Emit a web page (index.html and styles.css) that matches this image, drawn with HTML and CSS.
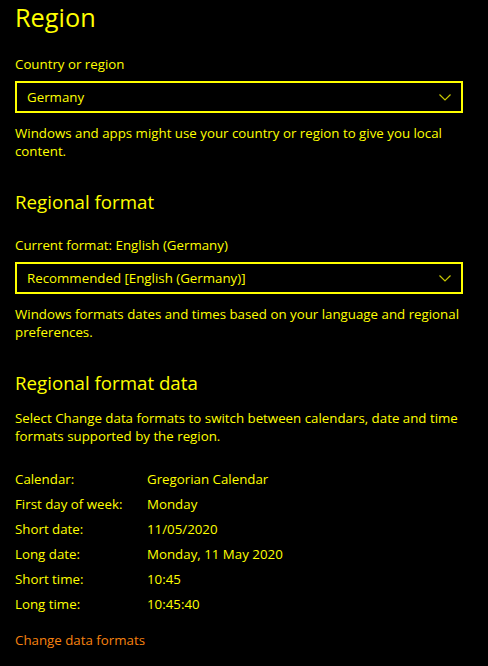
FILE: index.html
```html
<!DOCTYPE html>
<html lang="en">
<head>
<meta charset="utf-8">
<title>Region</title>
<link rel="stylesheet" href="styles.css">
</head>
<body>
<main class="page">
  <h1 class="title">Region</h1>

  <section class="group">
    <label class="label">Country or region</label>
    <div class="select">
      <span class="select-text">Germany</span>
      <svg class="chevron" width="12" height="7" viewBox="0 0 12 7"><path d="M0.5 0.5 L6 6 L11.5 0.5" fill="none" stroke="#c8c800" stroke-width="1.2"/></svg>
    </div>
    <p class="desc">Windows and apps might use your country or region to give you local content.</p>
  </section>

  <h2 class="heading">Regional format</h2>
  <section class="group">
    <label class="label">Current format: English (Germany)</label>
    <div class="select">
      <span class="select-text">Recommended [English (Germany)]</span>
      <svg class="chevron" width="12" height="7" viewBox="0 0 12 7"><path d="M0.5 0.5 L6 6 L11.5 0.5" fill="none" stroke="#c8c800" stroke-width="1.2"/></svg>
    </div>
    <p class="desc">Windows formats dates and times based on your language and regional preferences.</p>
  </section>

  <h2 class="heading">Regional format data</h2>
  <p class="desc desc-intro">Select Change data formats to switch between calendars, date and time formats supported by the region.</p>

  <dl class="data">
    <dt>Calendar:</dt><dd>Gregorian Calendar</dd>
    <dt>First day of week:</dt><dd>Monday</dd>
    <dt>Short date:</dt><dd>11/05/2020</dd>
    <dt>Long date:</dt><dd>Monday, 11 May 2020</dd>
    <dt>Short time:</dt><dd>10:45</dd>
    <dt>Long time:</dt><dd>10:45:40</dd>
  </dl>

  <a class="link" href="#">Change data formats</a>
</main>
</body>
</html>
```

FILE: styles.css
```css
html, body {
  margin: 0;
  padding: 0;
  background: #000;
}
body {
  font-family: "Open Sans", "Noto Sans", sans-serif;
  color: #ffff00;
  font-size: 13.3px;
}
.page {
  width: 448px;
  padding: 0 15px;
  display: flex;
  flex-direction: column;
  align-items: stretch;
}
.title {
  margin: 0;
  font-weight: 400;
  font-size: 25.3px;
  line-height: 34px;
}
.group {
  display: flex;
  flex-direction: column;
}
.label {
  display: block;
  margin-top: 20px;
  line-height: 20px;
}
.select {
  margin-top: 7px;
  height: 28px;
  border: 2px solid #ffff00;
  display: flex;
  align-items: center;
  justify-content: space-between;
  padding: 0 10px;
}
.select-text {
  line-height: 28px;
}
.desc {
  margin: 11px 0 0;
  line-height: 18px;
  width: 458px;
}
.heading {
  margin: 29px 0 0;
  font-weight: 400;
  font-size: 18.7px;
  line-height: 26px;
}
.desc-intro {
  margin-top: 13px;
}
.data {
  margin: 22px 0 0;
  display: grid;
  grid-template-columns: 132px 1fr;
  grid-auto-rows: 25px;
  align-items: center;
}
.data dt, .data dd {
  margin: 0;
  line-height: 25px;
}
.link {
  margin-top: 13px;
  color: #f7820f;
  text-decoration: none;
  line-height: 20px;
  align-self: flex-start;
}
```
